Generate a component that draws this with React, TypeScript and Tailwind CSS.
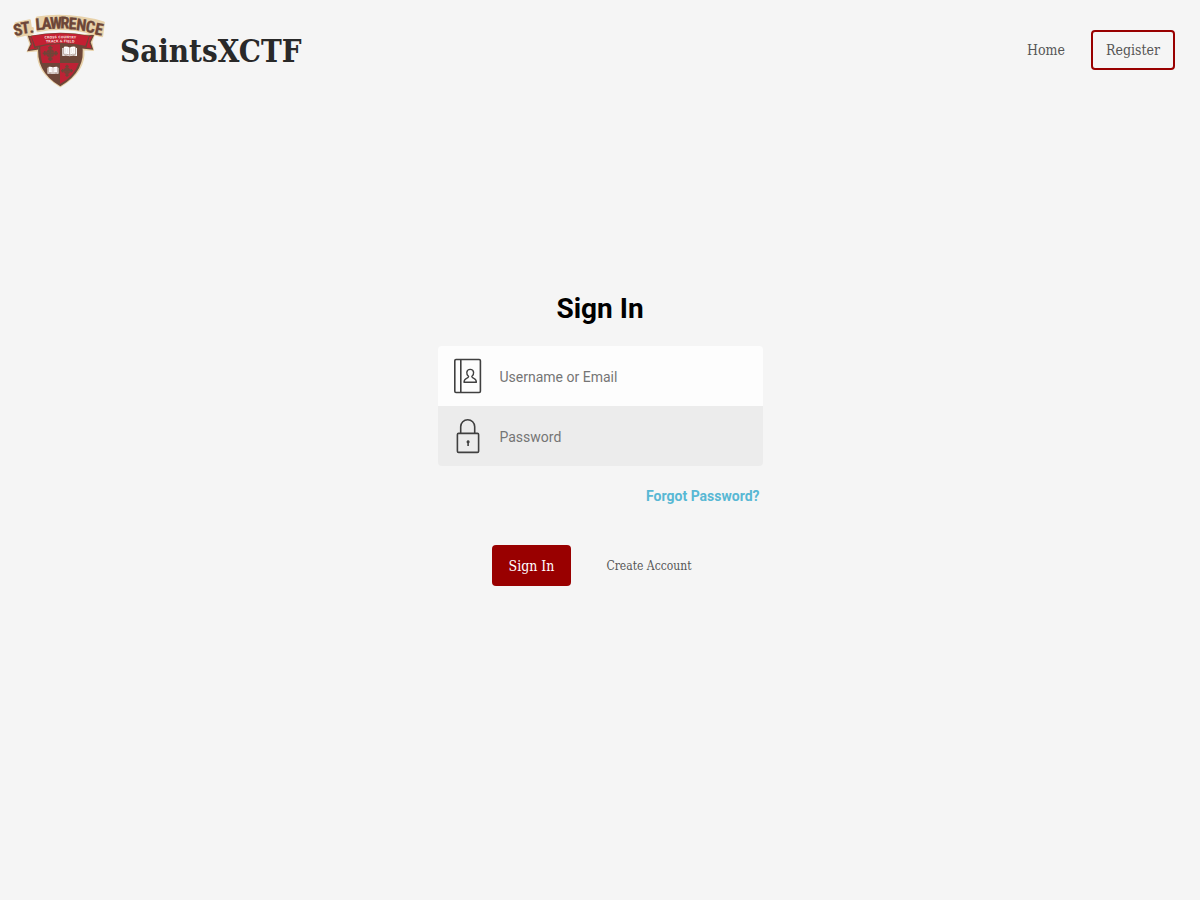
const slab = "font-['Roboto_Slab','DejaVu_Serif_Condensed','DejaVu_Serif',serif]";

function Cross({ x, y, r }: { x: number; y: number; r: number }) {
  return (
    <g transform={`translate(${x} ${y}) scale(${r / 24})`} fill="#6d4638">
      <path d="M-3-3V-15H-7V-20H-3V-24H3V-20H7V-15H3V-3H15V-7H20V-3H24V3H20V7H15V3H3V15H7V20H3V24H-3V20H-7V15H-3V3H-15V7H-20V3H-24V-3H-20V-7H-15V-3Z" />
      <path d="M-10-10h4v-3h3v10h-10v-3h3zM10-10h-4v-3h-3v10h10v-3h-3zM-10 10h4v3h3v-10h-10v3h3zM10 10h-4v3h-3v-10h10v3h-3z" />
    </g>
  );
}

function Book({ x, y, s }: { x: number; y: number; s: number }) {
  return (
    <g transform={`translate(${x} ${y}) scale(${s})`}>
      <path d="M-22-10 -17-11V-14Q-7-16 0-11Q7-16 17-14V-11L22-10V14Q10 10 0 15Q-10 10-22 14Z" fill="#fff" />
      <path d="M0-10V11M-18-10V9Q-7 7 0 12Q7 7 18 9V-10" fill="none" stroke="#6d4638" strokeWidth="1.5" />
      <path d="M-12-10V4M-6-9V5M6-9V5M12-10V4" fill="none" stroke="#c9b7b0" strokeWidth="1" />
    </g>
  );
}

function Logo() {
  return (
    <svg viewBox="0 0 300 252" className="h-[84px] w-[100px] shrink-0" role="img" aria-label="St. Lawrence Cross Country Track and Field">
      <path d="M50 79 85 86Q153 69 220 81L254 77 245 102 250 127 221 125Q228 190 151 236Q78 193 83 128L52 131 60 108Z" fill="#e8d2aa" stroke="#e8d2aa" strokeWidth="4" strokeLinejoin="round" />
      <path d="M86 108H216Q231 188 151 235Q74 190 86 108Z" fill="#6d4638" />
      <path d="M91 108H150V165H97Q90 145 91 108Z" fill="#bd2235" />
      <path d="M150 165H206Q194 204 150 228Z" fill="#bd2235" />
      <path d="M56 85 84 90V123L55 127 64 108ZM222 86 250 82 240 103 247 123 218 120Z" fill="#c42032" stroke="#6d4638" strokeWidth="4" />
      <path d="M62 83Q152 66 239 83L229 119Q152 96 73 121Z" fill="#6d4638" />
      <path d="M64 84Q152 68 237 84L226 113Q152 96 76 115Z" fill="#c42032" />
      <g className="font-['DejaVu_Sans',sans-serif] font-bold" fill="#f7dfda">
        <path id="motto-one" d="M80 93Q150 89 222 93" fill="none" />
        <path id="motto-two" d="M80 105Q150 101 222 105" fill="none" />
        <text fontSize="10" textAnchor="middle"><textPath href="#motto-one" startOffset="50%">CROSS COUNTRY</textPath></text>
        <text fontSize="10" textAnchor="middle"><textPath href="#motto-two" startOffset="50%">TRACK &amp; FIELD</textPath></text>
      </g>
      <Cross x={121} y={136} r={23} />
      <Cross x={171} y={188} r={18} />
      <Book x={179} y={130} s={1} />
      <Book x={129} y={187} s={0.75} />
      <path d="M17 46 59 37 62 58 68 60V75L23 85ZM81 29Q180 14 281 44L276 84 253 78Q165 53 83 69Z" fill="#e8d2aa" stroke="#e8d2aa" strokeWidth="7" strokeLinejoin="round" />
      <text
        x="14 35 59 70 78 96 120 151 175 197 225 252"
        y="85 78 75 70 67 64 62 61 63 66 71 78"
        rotate="-12 -8 -6 0 -5 -3 -1 2 4 7 9 12"
        fontSize="49"
        className="font-['Roboto_Condensed','Noto_Sans_CJK_JP',sans-serif] font-bold"
        fill="#6d4638"
        stroke="#6d4638"
        strokeWidth="1"
      >
        ST. LAWRENCE
      </text>
    </svg>
  );
}

function ContactIcon() {
  return (
    <svg viewBox="0 0 30 36" className="h-9 w-[30px]" fill="none" stroke="#404040" strokeWidth="1.6" strokeLinejoin="round" aria-hidden="true">
      <rect x="1.8" y="1.5" width="25.6" height="33" rx="1.2" />
      <path d="M7.8 1.5V34.5" />
      <path d="M15.6 18.4C14.2 17 13.6 15.6 13.8 14.3C14 12.6 15.4 11.4 17.2 11.4C19 11.4 20.4 12.6 20.6 14.3C20.8 15.6 20.2 17 18.8 18.4Q19 19.7 20.8 20.3Q23.3 21.1 23.4 24.3H11Q11.1 21.1 13.6 20.3Q15.4 19.7 15.6 18.4Z" strokeWidth="1.4" />
    </svg>
  );
}

function LockIcon() {
  return (
    <svg viewBox="0 0 30 36" className="h-9 w-[30px]" fill="none" stroke="#404040" strokeWidth="1.6" aria-hidden="true">
      <rect x="4.4" y="15.4" width="21.2" height="19" rx="1.2" />
      <path d="M7.7 15.4V8.7A7 7 0 0 1 21.7 8.7V15.4" />
      <path d="M15.1 22.2A1.7 1.7 0 0 1 15.9 25.3V28H14.3V25.3A1.7 1.7 0 0 1 15.1 22.2Z" fill="#404040" stroke="none" />
    </svg>
  );
}

export default function App() {
  return (
    <div className="flex min-h-screen flex-col bg-[#f5f5f5] font-['Roboto',sans-serif] text-black">
      <header className="flex h-[100px] items-center justify-between pr-[25px] pl-[10px]">
        <a href="#" className="flex items-center gap-[10px]">
          <Logo />
          <span className={`${slab} pt-0.5 text-[31px] leading-10 font-bold text-[#292929]`}>SaintsXCTF</span>
        </a>
        <nav className={`${slab} flex items-center gap-[13px] text-sm text-[#555]`}>
          <a href="#home" className="px-[13px] py-2">Home</a>
          <a href="#register" className="flex h-10 items-center rounded border-2 border-[#900] px-[13px]">Register</a>
        </nav>
      </header>
      <main className="flex flex-col items-center px-4 pt-[191px]">
        <form className="flex w-full max-w-[325px] flex-col" onSubmit={(e) => e.preventDefault()}>
          <h1 className="text-center text-[28px] leading-9 font-bold">Sign In</h1>
          <div className="mt-[19px] overflow-hidden rounded">
            <label className="flex h-[60px] items-center gap-[17px] bg-[#fdfdfd] pl-[15px]">
              <ContactIcon />
              <input type="text" aria-label="Username or Email" placeholder="Username or Email" className="h-full min-w-0 flex-1 bg-transparent pt-0.5 text-sm outline-none placeholder:text-[#757575]" />
            </label>
            <label className="flex h-[60px] items-center gap-[17px] bg-[#ececec] pl-[15px]">
              <LockIcon />
              <input type="password" aria-label="Password" placeholder="Password" className="h-full min-w-0 flex-1 bg-transparent pt-0.5 text-sm outline-none placeholder:text-[#757575]" />
            </label>
          </div>
          <a href="#forgot" className="mt-5 mr-[3px] self-end text-sm leading-5 font-bold text-[#58b8d4]">Forgot Password?</a>
          <div className={`${slab} mt-[39px] flex items-center justify-center gap-[18px]`}>
            <button type="submit" className="h-[41px] rounded bg-[#900] px-[17px] text-sm text-white">Sign In</button>
            <button type="button" className="h-[41px] px-[17px] text-xs text-[#555]">Create Account</button>
          </div>
        </form>
      </main>
    </div>
  );
}
